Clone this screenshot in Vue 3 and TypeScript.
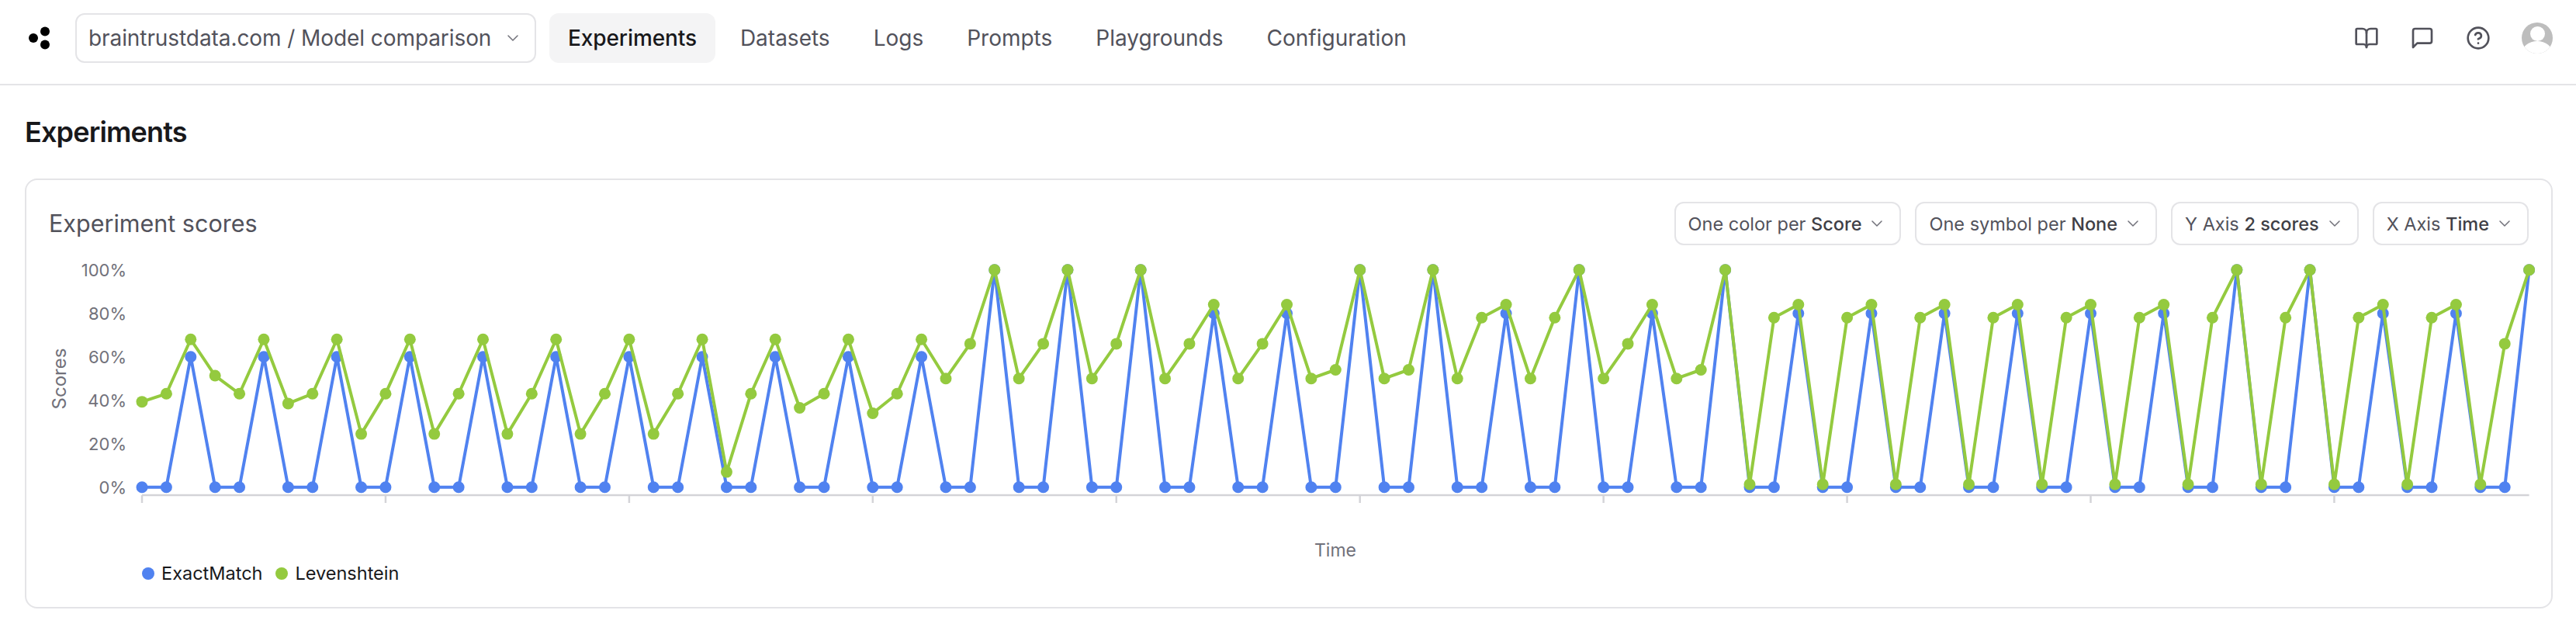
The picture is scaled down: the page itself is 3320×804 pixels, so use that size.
<script setup lang="ts">
import { computed } from 'vue'

const navItems = ['Experiments', 'Datasets', 'Logs', 'Prompts', 'Playgrounds', 'Configuration']

const filters = [
  { label: 'One color per', value: 'Score' },
  { label: 'One symbol per', value: 'None' },
  { label: 'Y Axis', value: '2 scores' },
  { label: 'X Axis', value: 'Time' }
]

// Levenshtein scores per experiment, read off the chart.
const levenshtein = [
  39.3, 43, 68, 51.3, 43, 68, 38.5, 43, 68, 24.5, 43, 68, 24.5, 43, 68, 24.5, 43, 68, 24.5, 43,
  68, 24.5, 43, 68, 7, 43, 68, 36.5, 43, 68, 34, 43, 68, 50, 66, 100, 50, 66, 100, 50,
  66, 100, 50, 66, 84, 50, 66, 84, 50, 54, 100, 50, 54, 100, 50, 78, 84, 50, 78, 100,
  50, 66, 84, 50, 54, 100, 1.3, 78, 84, 1.3, 78, 84, 1.3, 78, 84, 1.3, 78, 84, 1.3, 78,
  84, 1.3, 78, 84, 1.3, 78, 100, 1.3, 78, 100, 1.3, 78, 84, 1.3, 78, 84, 1.3, 66, 100
]

// ExactMatch only scores on every third experiment.
const exactPeaks: Record<number, number> = {
  35: 100, 38: 100, 41: 100, 50: 100, 53: 100, 59: 100, 65: 100, 86: 100, 89: 100, 98: 100
}
const exactMatch = levenshtein.map((_, i) => {
  if (i % 3 !== 2) return 0
  if (exactPeaks[i]) return exactPeaks[i]
  return i < 33 ? 60 : 80
})

// Chart geometry uses page pixels, see the viewBox on the svg.
const plotLeft = 183
const plotRight = 3259.6
const plotBottom = 627.7
const stepX = (plotRight - plotLeft) / (levenshtein.length - 1)

const xAt = (i: number) => plotLeft + i * stepX
const yAt = (v: number) => plotBottom - v * 2.8

function toPoints(values: number[]) {
  return values.map((v, i) => ({ x: xAt(i), y: yAt(v) }))
}

const series = computed(() => [
  { name: 'ExactMatch', color: '#5082f0', points: toPoints(exactMatch) },
  { name: 'Levenshtein', color: '#94ca3f', points: toPoints(levenshtein) }
])

function linePath(points: { x: number; y: number }[]) {
  return points.map((p) => `${p.x.toFixed(1)},${p.y.toFixed(1)}`).join(' ')
}

const yTicks = [100, 80, 60, 40, 20, 0]
const xTicks = [0, 10, 20, 30, 40, 50, 60, 70, 80, 90].map(xAt)
</script>

<template>
  <div class="page">
    <header class="topbar">
      <svg class="logo" width="38" height="38" viewBox="0 0 38 38" aria-label="Braintrust">
        <circle cx="6" cy="18" r="6" />
        <circle cx="21" cy="9.5" r="6" />
        <circle cx="21" cy="26.5" r="6" />
      </svg>
      <button class="project">
        <span>braintrustdata.com / Model comparison</span>
        <svg class="chevron" viewBox="0 0 24 24"><path d="m6 9 6 6 6-6" /></svg>
      </button>
      <nav class="nav">
        <a v-for="(item, i) in navItems" :key="item" class="nav-item" :class="{ active: i === 0 }">{{ item }}</a>
      </nav>
      <div class="actions">
        <button class="icon-btn">
          <svg viewBox="0 0 24 24">
            <path d="M12 7v14" />
            <path d="M3 18a1 1 0 0 1-1-1V4a1 1 0 0 1 1-1h5a4 4 0 0 1 4 4 4 4 0 0 1 4-4h5a1 1 0 0 1 1 1v13a1 1 0 0 1-1 1h-6a3 3 0 0 0-3 3 3 3 0 0 0-3-3z" />
          </svg>
        </button>
        <button class="icon-btn">
          <svg viewBox="0 0 24 24">
            <path d="M21 15a2 2 0 0 1-2 2H7l-4 4V5a2 2 0 0 1 2-2h14a2 2 0 0 1 2 2z" />
          </svg>
        </button>
        <button class="icon-btn">
          <svg viewBox="0 0 24 24">
            <circle cx="12" cy="12" r="10" />
            <path d="M9.09 9a3 3 0 0 1 5.83 1c0 2-3 3-3 3" />
            <path d="M12 17h.01" />
          </svg>
        </button>
        <svg class="avatar" width="40" height="40" viewBox="0 0 40 40">
          <defs>
            <clipPath id="avatar-clip"><circle cx="20" cy="20" r="20" /></clipPath>
          </defs>
          <g clip-path="url(#avatar-clip)">
            <rect width="40" height="40" fill="#bdbdbd" />
            <circle cx="20.5" cy="14.5" r="9.5" fill="#fff" />
            <ellipse cx="20" cy="40" rx="20" ry="16" fill="#fff" />
          </g>
        </svg>
      </div>
    </header>

    <main class="main">
      <h1 class="title">Experiments</h1>
      <section class="card">
        <div class="card-head">
          <h2 class="card-title">Experiment scores</h2>
          <div class="filters">
            <button v-for="f in filters" :key="f.label" class="filter">
              <span>{{ f.label }} <b>{{ f.value }}</b></span>
              <svg class="chevron" viewBox="0 0 24 24"><path d="m6 9 6 6 6-6" /></svg>
            </button>
          </div>
        </div>

        <svg class="chart" width="3196" height="404" viewBox="63 316 3196 404">
          <text v-for="t in yTicks" :key="t" class="tick-label" x="163" :y="yAt(t) + 8" text-anchor="end">{{ t }}%</text>
          <text class="axis-title" transform="translate(85 488) rotate(-90)" text-anchor="middle">Scores</text>
          <line class="axis" :x1="plotLeft" :x2="plotRight" y1="638" y2="638" />
          <line v-for="x in xTicks" :key="x" class="axis" :x1="x" :x2="x" y1="638" y2="648" />
          <text class="axis-title time" x="1721" y="717" text-anchor="middle">Time</text>
          <g v-for="s in series" :key="s.name">
            <polyline class="line" :stroke="s.color" :points="linePath(s.points)" />
            <circle v-for="(p, i) in s.points" :key="i" :cx="p.x" :cy="p.y" r="7.5" :fill="s.color" />
          </g>
        </svg>

        <div class="legend">
          <span v-for="s in series" :key="s.name" class="legend-item">
            <i class="dot" :style="{ background: s.color }"></i>{{ s.name }}
          </span>
        </div>
      </section>
    </main>
  </div>
</template>

<style>
html,
body {
  margin: 0;
  background: #fff;
}
</style>

<style scoped>
.page {
  font-family: Inter, "Liberation Sans", sans-serif;
  color: #18181b;
  width: 3320px;
  height: 804px;
  overflow: hidden;
}

button {
  font: inherit;
  background: none;
  border: 0;
  padding: 0;
  color: inherit;
}

.topbar {
  display: flex;
  align-items: center;
  box-sizing: border-box;
  height: 110px;
  padding: 17px 30px 27px 37px;
  border-bottom: 2px solid #e4e4e7;
}

.logo {
  flex: none;
  margin-right: 22px;
  margin-top: 1px;
  fill: #000;
}

.project {
  display: flex;
  align-items: center;
  box-sizing: border-box;
  height: 64px;
  width: 594px;
  padding: 0 16px 0 15px;
  justify-content: space-between;
  border: 2px solid #e4e4e7;
  border-radius: 12px;
  font-size: 28px;
  letter-spacing: -0.08px;
  color: #52525b;
}

.chevron {
  flex: none;
  width: 24px;
  height: 24px;
  fill: none;
  stroke: #71717a;
  stroke-width: 1.5;
  stroke-linecap: round;
  stroke-linejoin: round;
}

.nav {
  display: flex;
  gap: 8px;
  margin-left: 17px;
}

.nav-item {
  display: flex;
  align-items: center;
  height: 64px;
  padding: 0 24px;
  border-radius: 12px;
  font-size: 28px;
  color: #52525b;
}

.nav-item.active {
  background: #f4f4f5;
  font-weight: 500;
  letter-spacing: -0.1px;
  color: #18181b;
}

.actions {
  display: flex;
  align-items: center;
  gap: 8px;
  margin-left: auto;
}

.icon-btn {
  display: flex;
  align-items: center;
  justify-content: center;
  width: 64px;
  height: 64px;
}

.icon-btn svg {
  width: 32px;
  height: 32px;
  fill: none;
  stroke: #52525b;
  stroke-width: 2;
  stroke-linecap: round;
  stroke-linejoin: round;
}

.avatar {
  flex: none;
  margin-left: 16px;
}

.main {
  padding: 32px 30px 0 32px;
}

.title {
  margin: 0 0 32px;
  font-size: 36px;
  line-height: 56px;
  font-weight: 600;
  letter-spacing: -0.85px;
  color: #18181b;
}

.card {
  box-sizing: border-box;
  height: 554px;
  padding: 28px 29px 0;
  border: 2px solid #e4e4e7;
  border-radius: 16px;
}

.card-head {
  display: flex;
  align-items: center;
  justify-content: space-between;
  height: 56px;
}

.card-title {
  margin: -2px 0 0;
  font-size: 30.5px;
  font-weight: 400;
  color: #52525b;
}

.filters {
  display: flex;
  gap: 18px;
}

.filter {
  display: flex;
  align-items: center;
  gap: 8px;
  box-sizing: border-box;
  height: 56px;
  padding: 0 17px 0 16px;
  border: 2px solid #e4e4e7;
  border-radius: 12px;
  font-size: 23.5px;
  color: #52525b;
}

.filter b {
  font-weight: 500;
  color: #3f3f46;
}

.chart {
  display: block;
  overflow: visible;
}

.tick-label {
  font-size: 22px;
  fill: #71717a;
}

.axis-title {
  font-size: 24px;
  fill: #71717a;
}

.axis-title.time {
  font-size: 23px;
}

.axis {
  stroke: #d4d4d8;
  stroke-width: 2.5;
}

.line {
  fill: none;
  stroke-width: 4;
  stroke-linejoin: round;
}

.legend {
  display: flex;
  gap: 17px;
  margin-top: 3px;
  padding-left: 120px;
  font-size: 23.5px;
  line-height: 32px;
  color: #18181b;
}

.legend-item {
  display: flex;
  align-items: center;
  gap: 9px;
}

.dot {
  width: 16px;
  height: 16px;
  border-radius: 50%;
}
</style>
